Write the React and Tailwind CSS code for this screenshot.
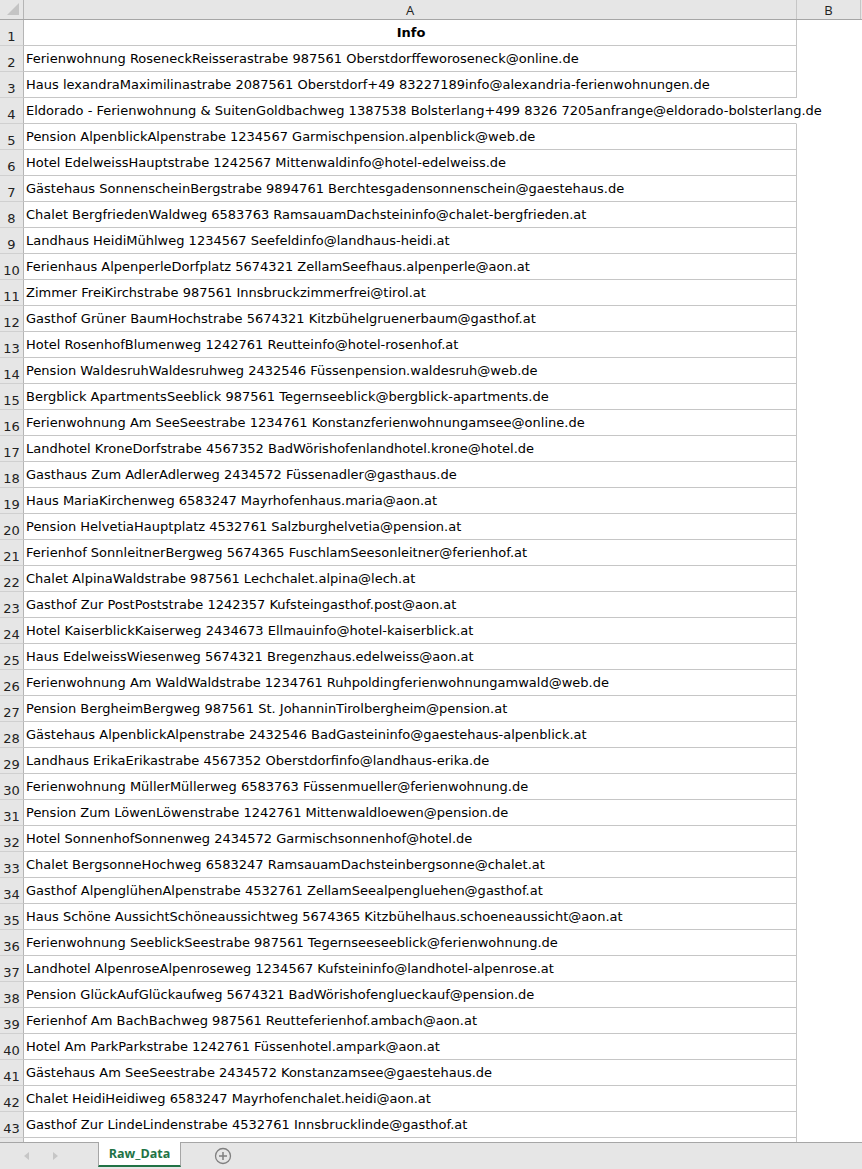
import React from "react";

const rows = [
  "Ferienwohnung RoseneckReisserastrabe 987561 Oberstdorffeworoseneck@online.de",
  "Haus lexandraMaximilinastrabe 2087561 Oberstdorf+49 83227189info@alexandria-ferienwohnungen.de",
  "Eldorado - Ferienwohnung & SuitenGoldbachweg 1387538 Bolsterlang+499 8326 7205anfrange@eldorado-bolsterlang.de",
  "Pension AlpenblickAlpenstrabe 1234567 Garmischpension.alpenblick@web.de",
  "Hotel EdelweissHauptstrabe 1242567 Mittenwaldinfo@hotel-edelweiss.de",
  "Gästehaus SonnenscheinBergstrabe 9894761 Berchtesgadensonnenschein@gaestehaus.de",
  "Chalet BergfriedenWaldweg 6583763 RamsauamDachsteininfo@chalet-bergfrieden.at",
  "Landhaus HeidiMühlweg 1234567 Seefeldinfo@landhaus-heidi.at",
  "Ferienhaus AlpenperleDorfplatz 5674321 ZellamSeefhaus.alpenperle@aon.at",
  "Zimmer FreiKirchstrabe 987561 Innsbruckzimmerfrei@tirol.at",
  "Gasthof Grüner BaumHochstrabe 5674321 Kitzbühelgruenerbaum@gasthof.at",
  "Hotel RosenhofBlumenweg 1242761 Reutteinfo@hotel-rosenhof.at",
  "Pension WaldesruhWaldesruhweg 2432546 Füssenpension.waldesruh@web.de",
  "Bergblick ApartmentsSeeblick 987561 Tegernseeblick@bergblick-apartments.de",
  "Ferienwohnung Am SeeSeestrabe 1234761 Konstanzferienwohnungamsee@online.de",
  "Landhotel KroneDorfstrabe 4567352 BadWörishofenlandhotel.krone@hotel.de",
  "Gasthaus Zum AdlerAdlerweg 2434572 Füssenadler@gasthaus.de",
  "Haus MariaKirchenweg 6583247 Mayrhofenhaus.maria@aon.at",
  "Pension HelvetiaHauptplatz 4532761 Salzburghelvetia@pension.at",
  "Ferienhof SonnleitnerBergweg 5674365 FuschlamSeesonleitner@ferienhof.at",
  "Chalet AlpinaWaldstrabe 987561 Lechchalet.alpina@lech.at",
  "Gasthof Zur PostPoststrabe 1242357 Kufsteingasthof.post@aon.at",
  "Hotel KaiserblickKaiserweg 2434673 Ellmauinfo@hotel-kaiserblick.at",
  "Haus EdelweissWiesenweg 5674321 Bregenzhaus.edelweiss@aon.at",
  "Ferienwohnung Am WaldWaldstrabe 1234761 Ruhpoldingferienwohnungamwald@web.de",
  "Pension BergheimBergweg 987561 St. JohanninTirolbergheim@pension.at",
  "Gästehaus AlpenblickAlpenstrabe 2432546 BadGasteininfo@gaestehaus-alpenblick.at",
  "Landhaus ErikaErikastrabe 4567352 Oberstdorfinfo@landhaus-erika.de",
  "Ferienwohnung MüllerMüllerweg 6583763 Füssenmueller@ferienwohnung.de",
  "Pension Zum LöwenLöwenstrabe 1242761 Mittenwaldloewen@pension.de",
  "Hotel SonnenhofSonnenweg 2434572 Garmischsonnenhof@hotel.de",
  "Chalet BergsonneHochweg 6583247 RamsauamDachsteinbergsonne@chalet.at",
  "Gasthof AlpenglühenAlpenstrabe 4532761 ZellamSeealpengluehen@gasthof.at",
  "Haus Schöne AussichtSchöneaussichtweg 5674365 Kitzbühelhaus.schoeneaussicht@aon.at",
  "Ferienwohnung SeeblickSeestrabe 987561 Tegernseeseeblick@ferienwohnung.de",
  "Landhotel AlpenroseAlpenroseweg 1234567 Kufsteininfo@landhotel-alpenrose.at",
  "Pension GlückAufGlückaufweg 5674321 BadWörishofenglueckauf@pension.de",
  "Ferienhof Am BachBachweg 987561 Reutteferienhof.ambach@aon.at",
  "Hotel Am ParkParkstrabe 1242761 Füssenhotel.ampark@aon.at",
  "Gästehaus Am SeeSeestrabe 2434572 Konstanzamsee@gaestehaus.de",
  "Chalet HeidiHeidiweg 6583247 Mayrhofenchalet.heidi@aon.at",
  "Gasthof Zur LindeLindenstrabe 4532761 Innsbrucklinde@gasthof.at",
];

function RowNumber({ n }) {
  return (
    <div className="w-[24px] shrink-0 h-full bg-[#e6e6e6] border-r border-b border-r-[#b5b5b5] border-b-[#d0d0d0] flex items-end justify-center pb-[2px] text-[13px] leading-none text-[#222]">
      {n}
    </div>
  );
}

function Row({ n, text, header }) {
  // row 4 text runs into column B, so its right edge has no border
  const overflow = text.length > 105;
  return (
    <div className="flex h-[26px] shrink-0">
      <RowNumber n={n} />
      <div
        className={`w-[773px] shrink-0 h-full border-b border-[#c6c6c6] flex items-center pl-[2px] pt-[1px] whitespace-nowrap text-[13px] text-black ${
          overflow ? "overflow-visible border-r border-r-transparent" : "overflow-hidden border-r"
        } ${header ? "justify-center font-bold" : ""}`}
      >
        {text}
      </div>
      <div className="flex-1" />
    </div>
  );
}

export default function App() {
  return (
    <div className="w-[862px] h-[1169px] flex flex-col bg-white overflow-hidden font-['DejaVu_Sans',Verdana,sans-serif]">
      {/* Column headers */}
      <div className="flex h-[20px] shrink-0 bg-[#e6e6e6] border-b border-[#a6a6a6] font-['Open_Sans','Liberation_Sans',sans-serif] text-[13px] text-[#222]">
        <div className="w-[24px] shrink-0 border-r border-[#b5b5b5] flex items-end justify-end p-[3px]">
          <svg width="14" height="14" viewBox="0 0 14 14">
            <polygon points="1,13 13,13 13,1" fill="#c4c4c4" />
          </svg>
        </div>
        <div className="w-[773px] shrink-0 border-r border-[#c6c6c6] flex items-center justify-center pt-[2px]">A</div>
        <div className="w-[64px] shrink-0 border-r border-[#c6c6c6] flex items-center justify-center pt-[2px]">B</div>
        <div className="flex-1" />
      </div>

      {/* Sheet body; the last row is only partly visible above the tabs */}
      <div className="flex-1 flex flex-col overflow-hidden">
        <Row n={1} text="Info" header />
        {rows.map((t, i) => (
          <Row key={i} n={i + 2} text={t} />
        ))}
        <Row n="" text="" />
      </div>

      {/* Sheet tabs */}
      <div className="h-[27px] shrink-0 bg-[#e6e6e6] border-t border-[#a6a6a6] flex items-stretch">
        <div className="flex items-center gap-[22px] pl-[24px] w-[98px]">
          <svg width="6" height="8" viewBox="0 0 6 8">
            <polygon points="5,0 5,8 0,4" fill="#c6c6c6" />
          </svg>
          <svg width="6" height="8" viewBox="0 0 6 8">
            <polygon points="1,0 1,8 6,4" fill="#c6c6c6" />
          </svg>
        </div>
        <div className="w-[83px] bg-white border-x border-[#a6a6a6] -mt-px mb-[2px] border-b-2 border-b-[#217346] flex items-center justify-center pt-[1px] font-['Open_Sans','DejaVu_Sans',sans-serif] text-[12.5px] font-bold text-[#217346]">
          Raw_Data
        </div>
        <div className="flex items-center pl-[33px]">
          <svg width="18" height="18" viewBox="0 0 18 18">
            <circle cx="9" cy="9" r="7.5" fill="none" stroke="#7f7f7f" strokeWidth="1.3" />
            <path d="M9 5v8M5 9h8" stroke="#7f7f7f" strokeWidth="1.5" />
          </svg>
        </div>
      </div>
    </div>
  );
}
